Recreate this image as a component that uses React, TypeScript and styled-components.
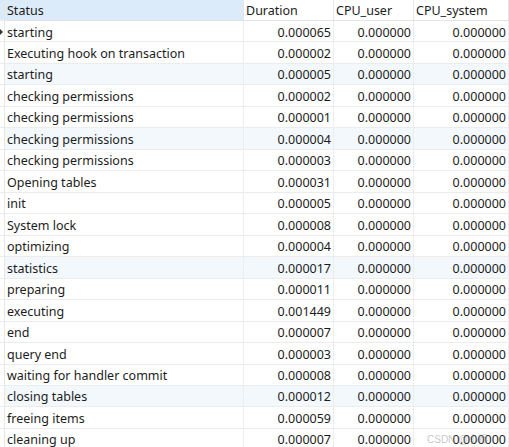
import React from "react";
import styled, { createGlobalStyle } from "styled-components";

const Global = createGlobalStyle`
  html, body { margin: 0; padding: 0; background: #ffffff; }
  body { font-family: "Noto Sans", "Open Sans", "Noto Sans CJK SC", sans-serif; }
`;

const rows: [string, string][] = [
  ["starting", "0.000065"],
  ["Executing hook on transaction", "0.000002"],
  ["starting", "0.000005"],
  ["checking permissions", "0.000002"],
  ["checking permissions", "0.000001"],
  ["checking permissions", "0.000004"],
  ["checking permissions", "0.000003"],
  ["Opening tables", "0.000031"],
  ["init", "0.000005"],
  ["System lock", "0.000008"],
  ["optimizing", "0.000004"],
  ["statistics", "0.000017"],
  ["preparing", "0.000011"],
  ["executing", "0.001449"],
  ["end", "0.000007"],
  ["query end", "0.000003"],
  ["waiting for handler commit", "0.000008"],
  ["closing tables", "0.000012"],
  ["freeing items", "0.000059"],
  ["cleaning up", "0.000007"],
];

const tinted = new Set([2, 5, 11, 17]);

const Page = styled.div`
  position: relative;
  width: 509px;
  height: 447px;
  overflow: hidden;
  background: #fff;
`;

const Grid = styled.div`
  display: grid;
  grid-template-columns: 5px 239px 90px 80px 95px;
  grid-template-rows: 21px;
  grid-auto-rows: 21.47px;
  width: 509px;
`;

const Indicator = styled.div<{ $header?: boolean }>`
  border-right: 1px solid #e6e6e6;
  border-bottom: 1px solid #ececec;
  background: ${(p) => (p.$header ? "#dcebf9" : "#ffffff")};
  position: relative;
  box-sizing: border-box;
`;

const Arrow = styled.span`
  position: absolute;
  left: 0;
  top: 8px;
  width: 0;
  height: 0;
  border-top: 3px solid transparent;
  border-bottom: 3px solid transparent;
  border-left: 3px solid #333;
`;

const HeadCell = styled.div<{ $active?: boolean }>`
  box-sizing: border-box;
  background: ${(p) => (p.$active ? "#dcebf9" : "#ffffff")};
  border-right: 1px solid #e6e6e6;
  border-bottom: 1px solid #e3e3e3;
  padding: 1px 3px 0 2px;
  font-size: 12.5px;
  line-height: 19px;
  color: #1c1c1c;
  white-space: nowrap;
  overflow: hidden;
`;

const Cell = styled.div<{ $num?: boolean; $tint?: boolean }>`
  box-sizing: border-box;
  background: ${(p) => (p.$tint ? "#f3f8fd" : "#ffffff")};
  border-right: 1px solid #ededed;
  border-bottom: 1px solid #ececec;
  padding: ${(p) => (p.$num ? "1.5px 2px 0 3px" : "1.5px 3px 0 2px")};
  text-align: ${(p) => (p.$num ? "right" : "left")};
  font-size: 12.5px;
  line-height: 19.5px;
  color: #1c1c1c;
  white-space: nowrap;
  overflow: hidden;
`;

const Watermark = styled.div`
  position: absolute;
  left: 427px;
  top: 431px;
  font-size: 10px;
  color: rgba(150, 150, 150, 0.55);
  white-space: nowrap;
  font-family: "Liberation Sans", "Noto Sans CJK SC", sans-serif;
`;

export default function App() {
  return (
    <Page>
      <Global />
      <Grid>
        <Indicator $header />
        <HeadCell $active>Status</HeadCell>
        <HeadCell>Duration</HeadCell>
        <HeadCell>CPU_user</HeadCell>
        <HeadCell>CPU_system</HeadCell>
        {rows.map(([s, d], i) => (
          <React.Fragment key={i}>
            <Indicator>{i === 0 && <Arrow />}</Indicator>
            <Cell $tint={tinted.has(i)}>{s}</Cell>
            <Cell $num $tint={tinted.has(i)}>{d}</Cell>
            <Cell $num $tint={tinted.has(i)}>0.000000</Cell>
            <Cell $num $tint={tinted.has(i)}>0.000000</Cell>
          </React.Fragment>
        ))}
      </Grid>
      <Watermark>CSDN @小猴</Watermark>
    </Page>
  );
}
